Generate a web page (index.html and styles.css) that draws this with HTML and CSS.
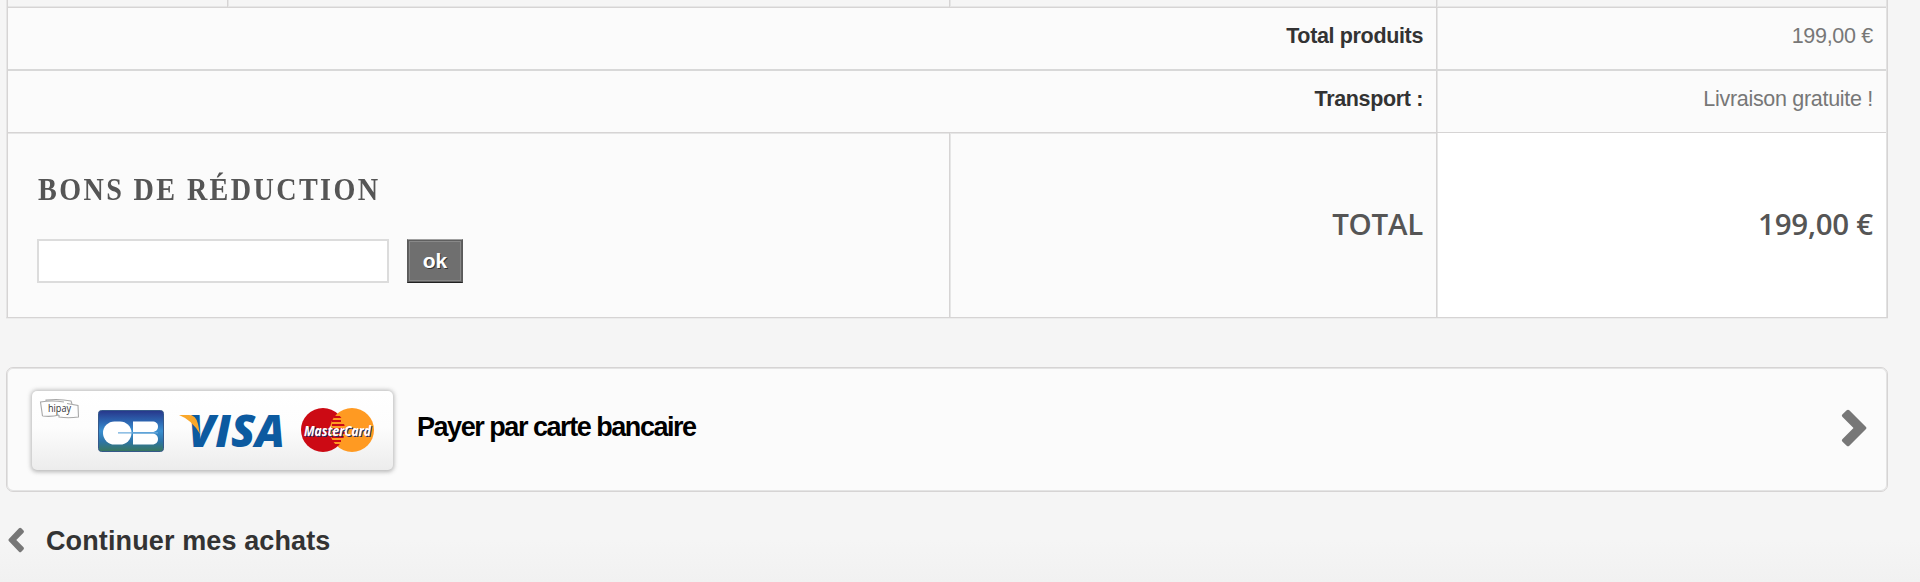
FILE: index.html
```html
<!DOCTYPE html>
<html lang="fr">
<head>
<meta charset="utf-8">
<title>Panier</title>
<link rel="stylesheet" href="styles.css">
</head>
<body>
<main class="cart">
  <section class="summary">
    <div class="row row-head"><div class="cell c1"></div><div class="cell c2"></div><div class="cell c3"></div><div class="cell amount"></div></div>
    <div class="row row-line"><div class="cell label">Total produits</div><div class="cell amount">199,00 €</div></div>
    <div class="row row-line"><div class="cell label">Transport :</div><div class="cell amount">Livraison gratuite !</div></div>
    <div class="row row-total">
      <div class="cell voucher">
        <h4 class="voucher-title">BONS DE RÉDUCTION</h4>
        <form class="voucher-form"><input class="voucher-input" type="text"><button class="voucher-ok" type="button">ok</button></form>
      </div>
      <div class="cell total-label">TOTAL</div>
      <div class="cell amount total-amount">199,00 €</div>
    </div>
  </section>

  <a class="payment">
    <svg class="cards" width="380" height="100" viewBox="0 0 380 100">
      <defs>
        <linearGradient id="panel" x1="0" y1="0" x2="0" y2="1"><stop offset="0" stop-color="#fff"/><stop offset=".45" stop-color="#fdfdfd"/><stop offset="1" stop-color="#ececec"/></linearGradient>
        <linearGradient id="cb" x1="0" y1="0" x2="0" y2="1"><stop offset="0" stop-color="#28368a"/><stop offset=".25" stop-color="#2c62ae"/><stop offset=".5" stop-color="#3a8fd0"/><stop offset=".75" stop-color="#2d74a8"/><stop offset="1" stop-color="#39775c"/></linearGradient>
        <filter id="shade" x="-5%" y="-15%" width="110%" height="130%"><feGaussianBlur stdDeviation="2"/></filter>
        <clipPath id="redclip"><circle cx="315" cy="52" r="22"/></clipPath>
      </defs>
      <rect x="23" y="12" width="363" height="82" rx="6" fill="#999" opacity=".7" filter="url(#shade)"/>
      <rect x="24" y="13" width="361" height="79" rx="5" fill="url(#panel)"/>
      <g fill="none" stroke="#a8a8a8" stroke-width="1.1">
        <path d="M34.500 38 32.500 24Q44 22 56 24M38 23V22Q52 20.500 63 23L64 26M59 25.500 70 27.500 70.500 39Q60 40.500 51 39V37M34.500 38Q44 39 51 37"/>
      </g>
      <text class="hipay" x="40" y="34" textLength="23" lengthAdjust="spacingAndGlyphs">hipay</text>
      <rect x="90.500" y="32.500" width="65" height="41" rx="3" fill="url(#cb)" stroke="#35598a"/>
      <rect x="95" y="43.500" width="28.500" height="23" rx="11.500" fill="#fff"/>
      <path fill="#fff" d="M125 43.500H144C148 43.500 150 45.500 150 48.500S148 54 144 54H125ZM125 55.500H144C148 55.500 150 58 150 61S148 66.500 144 66.500H125Z"/>
      <path stroke="#6cabdc" stroke-width="1.300" d="M110 54.800H150"/>
      <text class="visa" x="180" y="69" textLength="97" lengthAdjust="spacingAndGlyphs">VISA</text>
      <path fill="#f9a72b" d="M171 37H181Q188 37 190 46L192 56Q184 42 171 37Z"/>
      <circle cx="315" cy="52" r="22" fill="#cc0a14"/>
      <circle cx="344" cy="52" r="22" fill="#ff9a22"/>
      <path clip-path="url(#redclip)" stroke="#cc0a14" stroke-width="2" d="M326 39H334M324 43H333M324 47H340M324 51H340M324 55H340M324 59H340M324 63H333M326 67H334"/>
      <text class="mc mc-shadow" x="297" y="58.500" textLength="67" lengthAdjust="spacingAndGlyphs">MasterCard</text>
      <text class="mc" x="296" y="57.500" textLength="67" lengthAdjust="spacingAndGlyphs">MasterCard</text>
    </svg>
    <span class="pay-text">Payer par carte bancaire</span>
    <svg class="chevron" width="26" height="38" viewBox="0 0 26 38"><path fill="#777" d="M1.300 5.500 5.700 1.200Q7 .2 8.300 1.200L25 18Q26 19 25 20L8.300 36.800Q7 37.800 5.700 36.800L1.300 32.500Q.3 31.500 1.300 30.300L12.500 19 1.300 7.700Q.3 6.500 1.300 5.500Z"/></svg>
  </a>

  <a class="back">
    <svg width="17" height="26" viewBox="0 0 17 26"><path fill="#777" d="M11 1.200Q12.200.2 13.300 1.200L15.500 3.500Q16.500 4.600 15.500 5.700L8.300 13 15.500 20.300Q16.500 21.400 15.500 22.500L13.300 24.800Q12.200 25.800 11 24.800L.8 14Q0 13 .8 12Z"/></svg>
    <span class="back-text">Continuer mes achats</span>
  </a>
</main>
</body>
</html>
```
FILE: styles.css
```css
* { box-sizing: border-box; }
body {
  margin: 0;
  height: 582px;
  overflow: hidden;
  background: linear-gradient(#f5f5f5 0, #f5f5f5 540px, #f1f1f1 582px);
  font-family: "Liberation Sans", Arial, sans-serif;
  color: #777;
}
.cart { padding-left: 6px; width: 1888px; }
.summary { border: solid #d6d4d4; border-width: 0 1px 1px 1px; border-left-color: #e6e6e6; box-shadow: inset 1px 0 #d6d4d4, inset -1px 0 #e2e2e2, 0 1px #ececec; height: 318px; padding: 0 1px; }
.row { display: flex; }
.cell { border-left: 1px solid #d6d4d4; box-shadow: inset 1px 0 #e6e6e6; }
.cell:first-child { border-left: 0; box-shadow: none; }
.row-head { height: 8px; border-bottom: 1px solid #d6d4d4; box-shadow: inset 0 -1px #e6e6e6; }
.c1 { width: 219px; }
.c2 { width: 722px; }
.row-head .c3 { flex: 1; }
.amount { width: 450px; }
.row-line { height: 63px; background: #fbfbfb; border-bottom: 2px solid #d8d8d8; line-height: 24px; font-size: 21.500px; letter-spacing: -.3px; }
.row-line + .row-line { height: 62px; border-bottom: 1px solid #d6d4d4; }
.label, .row-line .amount { padding: 16px 13px 0 0; text-align: right; }
.label { flex: 1; color: #333; font-weight: bold; letter-spacing: -.35px; }
.row-total { height: 184px; background: #fbfbfb; box-shadow: inset 0 1px #e6e6e6; }
.voucher { width: 941px; padding: 37px 0 0 30px; }
.voucher-title { margin: 0; font: bold 32px/38px "Liberation Serif", serif; color: #555; letter-spacing: 2.700px; white-space: nowrap; transform: scaleX(.88); transform-origin: 0 0; }
.voucher-form { display: flex; gap: 18px; margin: 31px 0 0 -1px; }
.voucher-input { width: 352px; height: 44px; border: 2px solid #dcdcdc; background: #fff; }
.voucher-ok { width: 56px; height: 44px; padding: 0; border: 1px solid #5a5a5a; border-top-color: #a0a0a0; border-bottom-color: #222; background: #6f6f6f; box-shadow: inset 0 0 0 1px #5f5f5f, inset 0 0 0 2px #888; color: #fff; font: bold 21px/38px "Liberation Sans", Arial, sans-serif; text-shadow: 1px 1px #333; }
.total-label { flex: 1; text-align: right; padding: 69px 13px 0 0; }
.total-label, .total-amount { font: 600 29.500px/44px "Open Sans", sans-serif; letter-spacing: -.25px; color: #555; }
.total-amount { background: #fff; background-clip: padding-box; text-align: right; padding: 69px 13px 0 0; }
.payment { display: flex; align-items: center; height: 125px; margin-top: 49px; border: 1px solid #d6d4d4; border-radius: 7px; background: #fbfbfb; box-shadow: inset 0 0 0 1px #e4e4e4; }
.cards { overflow: visible; flex: none; margin: -4px 0 0 1px; }
.hipay { font: 10px "Open Sans", sans-serif; fill: #333; }
.visa { font: italic 800 45px "Open Sans", sans-serif; fill: #0c5aa0; }
.mc { font: italic bold 14.500px "Open Sans", sans-serif; fill: #fff; }
.mc-shadow { fill: #222b66; }
.pay-text { margin: -5px 0 0 29px; flex: 1; color: #000; font-size: 27px; font-weight: bold; letter-spacing: -1.460px; }
.chevron { margin: -3px 20px 0 0; }
.back { display: flex; align-items: center; gap: 21px; margin: 31px 0 0 2px; color: #333; font-size: 27px; line-height: 32px; font-weight: bold; letter-spacing: .12px; }
.back-text { padding-top: 2px; }
```
